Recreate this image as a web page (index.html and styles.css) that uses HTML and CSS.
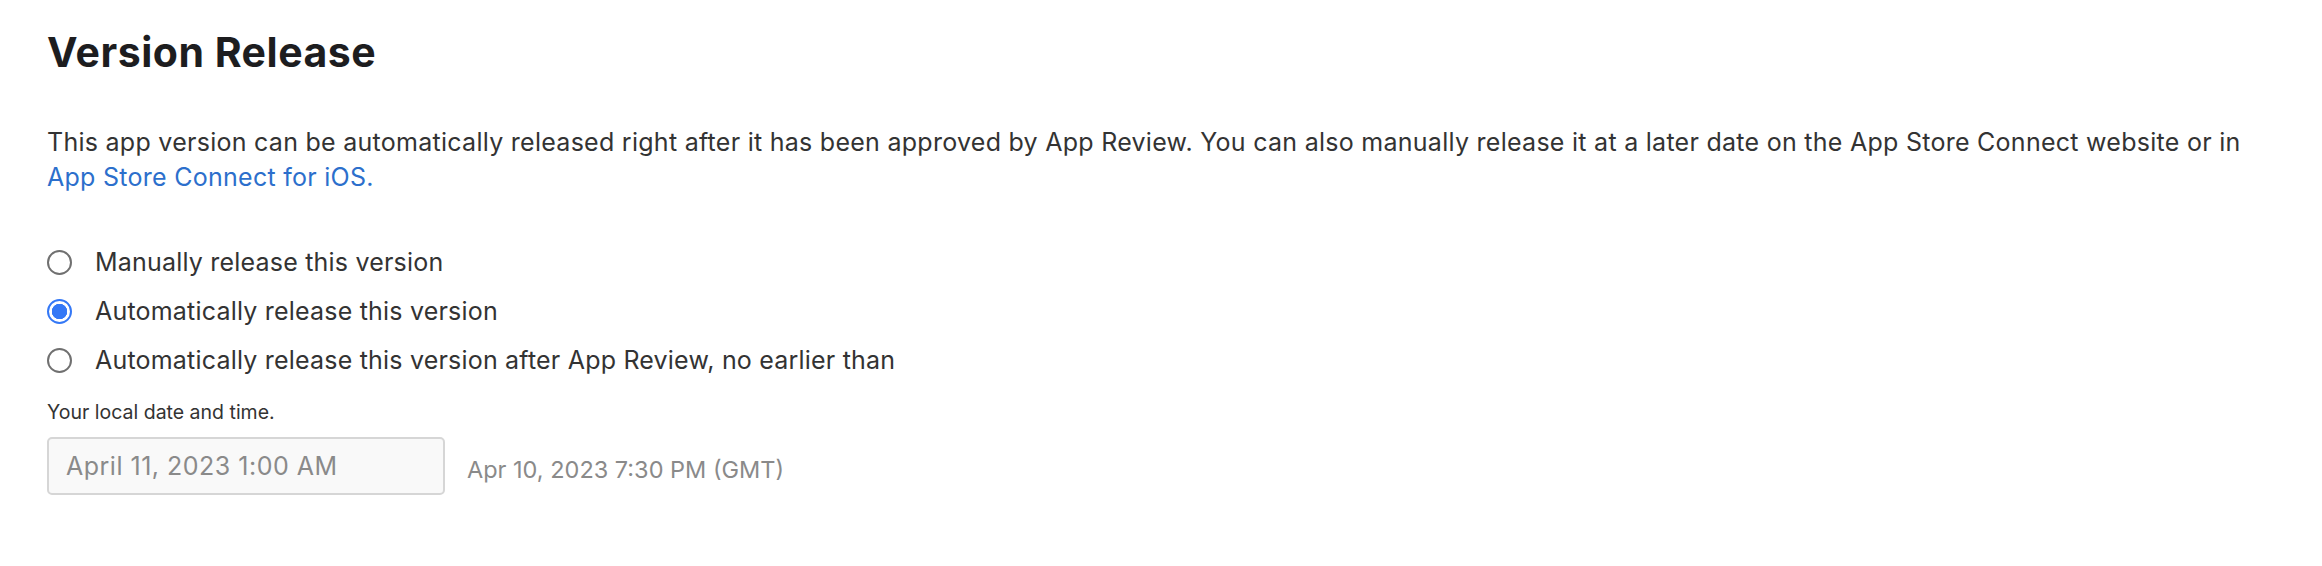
FILE: index.html
```html
<!DOCTYPE html>
<html lang="en">
<head>
<meta charset="utf-8">
<title>Version Release</title>
<link rel="stylesheet" href="styles.css">
</head>
<body>
<section class="page">
  <h2 class="title">Version Release</h2>
  <p class="intro">This app version can be automatically released right after it has been approved by App Review. You can also manually release it at a later date on the App Store Connect website or in <a class="link" href="#">App Store Connect for iOS.</a></p>
  <div class="options">
    <label class="option"><span class="radio"></span><span class="option-text">Manually release this version</span></label>
    <label class="option"><span class="radio radio-checked"></span><span class="option-text">Automatically release this version</span></label>
    <label class="option"><span class="radio"></span><span class="option-text">Automatically release this version after App Review, no earlier than</span></label>
  </div>
  <div class="hint">Your local date and time.</div>
  <div class="date-row">
    <div class="date-input">April 11, 2023 1:00 AM</div>
    <div class="date-gmt">Apr 10, 2023 7:30 PM (GMT)</div>
  </div>
</section>
</body>
</html>
```

FILE: styles.css
```css
html, body {
  margin: 0;
  padding: 0;
  background: #ffffff;
}

.page {
  padding: 28px 47px 40px 47px;
  font-family: Inter, "Liberation Sans", sans-serif;
  color: #333333;
}

.title {
  margin: 0;
  font-size: 41px;
  line-height: 48px;
  font-weight: 700;
  color: #1d1d1f;
  letter-spacing: 0.5px;
}

.intro {
  margin: 49px 0 0 0;
  font-size: 25px;
  line-height: 35px;
  letter-spacing: 0.27px;
  color: #333333;
}

.link {
  color: #2c6fcc;
  text-decoration: none;
  white-space: nowrap;
}

.options {
  margin-top: 50px;
  display: flex;
  flex-direction: column;
  gap: 14px;
}

.option {
  display: flex;
  align-items: center;
  gap: 23px;
  font-size: 25px;
  line-height: 35px;
  letter-spacing: 0.2px;
  color: #333333;
}

.radio {
  box-sizing: border-box;
  width: 25px;
  height: 25px;
  border-radius: 50%;
  border: 2px solid #707070;
  background: #ffffff;
  flex: none;
}

.radio-checked {
  border-color: #3478f6;
  background: radial-gradient(circle, #3478f6 0 7.5px, #ffffff 8px);
}

.hint {
  margin-top: 22px;
  font-size: 19.5px;
  line-height: 24px;
  color: #333333;
}

.date-row {
  margin-top: 13px;
  display: flex;
  align-items: flex-start;
  gap: 22px;
}

.date-input {
  box-sizing: border-box;
  width: 398px;
  height: 58px;
  border: 2px solid #d6d6d6;
  border-radius: 5px;
  background: #f9f9f9;
  padding: 0 17px;
  font-size: 25px;
  line-height: 54px;
  letter-spacing: 0.5px;
  color: #8a8a8a;
}

.date-gmt {
  margin-top: 15px;
  font-size: 23.5px;
  line-height: 35px;
  color: #8a8a8a;
}
```
